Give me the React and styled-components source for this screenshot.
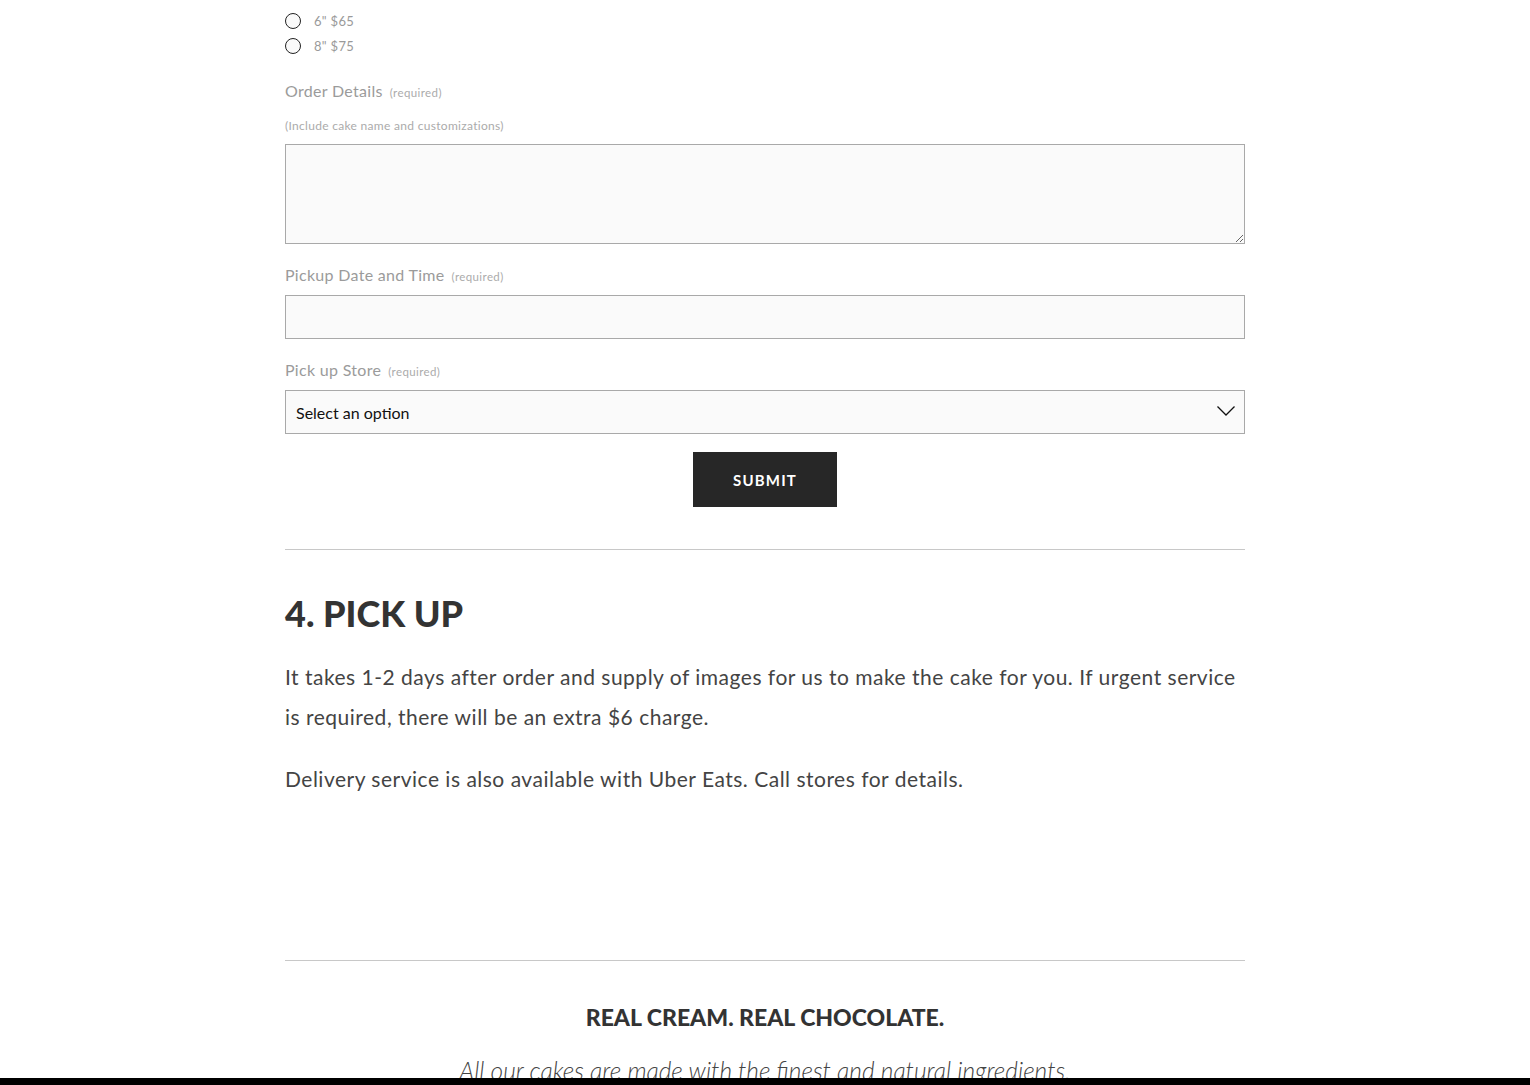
import React from "react";
import styled, { createGlobalStyle } from "styled-components";

const GlobalStyle = createGlobalStyle`
  html, body {
    margin: 0;
    padding: 0;
    background: #fff;
  }
  body {
    font-family: Lato, "Open Sans", "Liberation Sans", sans-serif;
    color: #333;
  }
`;

const sizes = [
  { id: "s6", label: "6\" $65" },
  { id: "s8", label: "8\" $75" },
];

const App = () => {
  return (
    <>
      <GlobalStyle />
      <Page>
        <Column>
          <Form onSubmit={(e) => e.preventDefault()}>
            <RadioList>
              {sizes.map((s) => (
                <RadioRow key={s.id}>
                  <Radio type="radio" name="size" id={s.id} />
                  <RadioLabel htmlFor={s.id}>{s.label}</RadioLabel>
                </RadioRow>
              ))}
            </RadioList>

            <Label $top={23}>
              Order Details <Required>(required)</Required>
            </Label>
            <Hint>(Include cake name and customizations)</Hint>
            <TextArea />

            <Label $top={21}>
              Pickup Date and Time <Required>(required)</Required>
            </Label>
            <Input type="text" />

            <Label $top={21}>
              Pick up Store <Required>(required)</Required>
            </Label>
            <SelectWrap>
              <Select defaultValue="">
                <option value="">Select an option</option>
                <option>Downtown</option>
                <option>Uptown</option>
              </Select>
              <Chevron viewBox="0 0 18 10" aria-hidden="true">
                <polyline points="0.5,0.5 9,9 17.5,0.5" />
              </Chevron>
            </SelectWrap>

            <Actions>
              <Submit type="submit">Submit</Submit>
            </Actions>
          </Form>

          <Rule $top={42} />

          <Heading>4. PICK UP</Heading>
          <Para>
            It takes 1-2 days after order and supply of images for us to make
            the cake for you. If urgent service is required, there will be an
            extra $6 charge.
          </Para>
          <Para $top={22}>
            Delivery service is also available with Uber Eats. Call stores for
            details.
          </Para>

          <Rule $top={161} />

          <Tagline>REAL CREAM. REAL CHOCOLATE.</Tagline>
          <Intro>All our cakes are made with the finest and natural ingredients.</Intro>
        </Column>
      </Page>
      <BottomBar />
    </>
  );
};

export default App;

const Page = styled.div`
  width: 100%;
  height: 1085px;
  overflow: hidden;
`;
const Column = styled.div`
  width: 960px;
  margin: 0 auto;
  display: flex;
  flex-direction: column;
`;
const Form = styled.form`
  display: flex;
  flex-direction: column;
`;
const RadioList = styled.div`
  display: flex;
  flex-direction: column;
  padding-top: 8px;
`;
const RadioRow = styled.div`
  display: flex;
  align-items: center;
  height: 25px;
  gap: 13px;
`;
const Radio = styled.input`
  appearance: none;
  margin: 0;
  width: 16px;
  height: 16px;
  border: 1px solid #222;
  border-radius: 50%;
  background: #fafafa;
  &:checked {
    background: radial-gradient(circle, #222 0 4px, #fafafa 4.5px);
  }
`;
const RadioLabel = styled.label`
  font-size: 13px;
  color: #9a9a9a;
  letter-spacing: 0.3px;
`;
const Label = styled.div`
  display: flex;
  align-items: baseline;
  gap: 7px;
  height: 20px;
  margin-top: ${(p) => p.$top}px;
  font-size: 16px;
  line-height: 20px;
  color: #9b9b9b;
  letter-spacing: 0.3px;
`;
const Required = styled.span`
  font-size: 11.5px;
  line-height: 14px;
  color: #ababab;
  letter-spacing: 0.4px;
`;
const Hint = styled.div`
  margin-top: 18px;
  font-size: 12px;
  line-height: 14px;
  color: #ababab;
  letter-spacing: 0.3px;
`;
const fieldBase = `
  display: block;
  box-sizing: border-box;
  width: 100%;
  margin: 0;
  background: #fafafa;
  border: 1px solid #a9a9a9;
  border-radius: 0;
  font-family: Lato, "Open Sans", "Liberation Sans", sans-serif;
  outline: none;
`;
const TextArea = styled.textarea`
  ${fieldBase}
  margin-top: 11px;
  height: 100px;
  resize: vertical;
`;
const Input = styled.input`
  ${fieldBase}
  margin-top: 10px;
  height: 44px;
  padding: 0 11px;
`;
const SelectWrap = styled.div`
  position: relative;
  margin-top: 10px;
`;
const Select = styled.select`
  ${fieldBase}
  appearance: none;
  height: 44px;
  padding: 0 10px;
  font-size: 16px;
  color: #111;
`;
const Chevron = styled.svg`
  position: absolute;
  right: 10px;
  top: 16px;
  width: 18px;
  height: 10px;
  pointer-events: none;
  fill: none;
  stroke: #111;
  stroke-width: 1.3;
`;
const Actions = styled.div`
  display: flex;
  justify-content: center;
  margin-top: 18px;
`;
const Submit = styled.button`
  width: 144px;
  height: 55px;
  border: none;
  background: #272727;
  color: #fff;
  font-family: Lato, "Open Sans", "Liberation Sans", sans-serif;
  font-weight: 700;
  font-size: 15px;
  letter-spacing: 1.2px;
  text-transform: uppercase;
  cursor: pointer;
`;
const Rule = styled.hr`
  margin: ${(p) => p.$top}px 0 0;
  border: none;
  border-top: 1px solid #c8c8c8;
  height: 0;
`;
const Heading = styled.h2`
  margin: 40px 0 0;
  font-size: 36px;
  line-height: 47px;
  font-weight: 900;
  color: #333;
  letter-spacing: 0;
`;
const Para = styled.p`
  margin: ${(p) => p.$top || 20}px 0 0;
  font-size: 21px;
  line-height: 40px;
  font-weight: 400;
  color: #444;
  letter-spacing: 0.5px;
`;
const Tagline = styled.h3`
  margin: 42px 0 0;
  text-align: center;
  font-size: 23px;
  line-height: 28px;
  font-weight: 900;
  color: #333;
  letter-spacing: 0;
`;
const Intro = styled.p`
  margin: 25px 0 0;
  text-align: center;
  font-size: 24.5px;
  line-height: 30px;
  font-style: italic;
  font-weight: 300;
  color: #444;
`;
const BottomBar = styled.div`
  position: fixed;
  left: 0;
  right: 0;
  bottom: 0;
  height: 7px;
  background: #000;
`;
